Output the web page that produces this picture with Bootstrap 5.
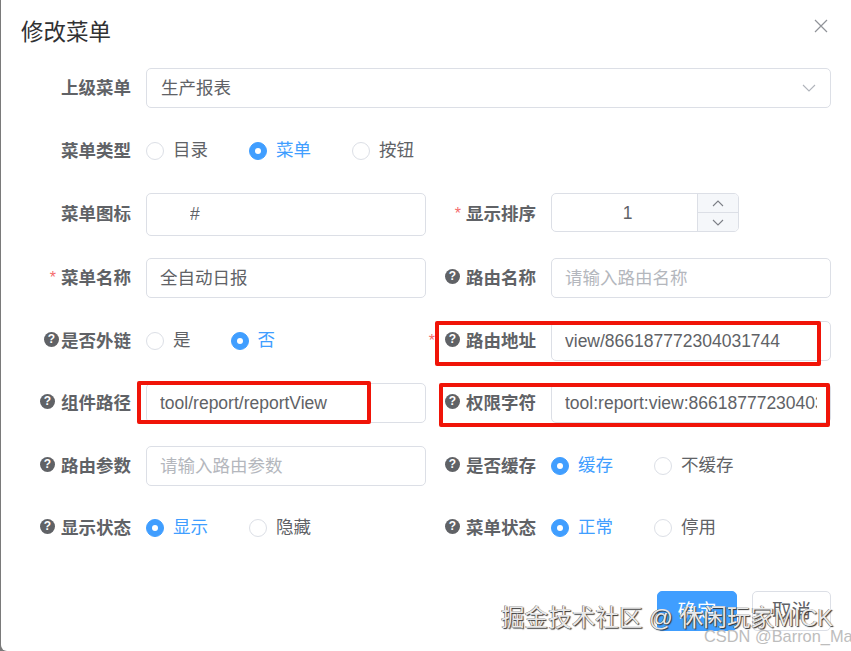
<!DOCTYPE html>
<html lang="zh-CN">
<head>
<meta charset="utf-8">
<title>修改菜单</title>
<link href="https://cdn.jsdelivr.net/npm/bootstrap@5.3.0/dist/css/bootstrap.min.css" rel="stylesheet">
<style>
html,body{height:100%;margin:0;overflow:hidden;background:#7a7a7a}
body{font-family:"Liberation Sans","Noto Sans CJK SC",sans-serif;color:#606266;font-size:17.5px}
.dlg{position:relative;height:651px;margin-left:1px;background:#fff;border-radius:0 0 0 6px;padding:0 20px}
.dlg-head{height:68px}
.dlg-title{font-size:22.5px;line-height:36px;padding-top:15px;color:#303133}
.dlg-close{border:0;background:none;padding:0;margin:19px 3px 0 0;width:14px;height:14px;line-height:0}
.frow{height:40px;margin-bottom:22px}
.frow-x{margin-bottom:23px}
.frow-tall{height:43px}
.fitem{height:100%}
.flabel{width:110px;flex:none;font-weight:700;color:#606266;margin-right:15px;white-space:nowrap;position:relative;top:1px;line-height:1}
.frow-tall .flabel{top:0}
.req{color:#f56c6c;font-weight:400;margin-right:5px;font-size:16px;position:relative;top:-1px}
.req-far{margin-right:10px}
.tip{display:inline-block;width:15px;height:15px;border-radius:50%;background:#606266;color:#fff;font-size:12px;font-weight:700;line-height:15px;text-align:center;position:relative;top:-4px;margin-right:6px;flex:none}
.tip-tight{margin-right:2px}
.ctrl.form-control{width:280px;height:40px;border:1px solid #dcdfe6;border-radius:5px;padding:0 13px;font-size:17.5px;line-height:38px;color:#606266;background:#fff;white-space:nowrap}
.ctrl-tall.form-control{height:43px;line-height:40px;padding-left:43px}
.clip{display:block;overflow:hidden}
.ph{color:#b4b7bd}
.ctrl-wide.form-control{width:100%;position:relative;padding-left:14px}
.chev{position:absolute;right:14px;top:14px}
.spin{width:188px;height:39px;border:1px solid #dcdfe6;border-radius:5px;overflow:hidden}
.spin-val{width:145px;text-align:center;line-height:38px;padding-left:6px}
.spin-btns{width:41px;border-left:1px solid #dcdfe6;background:#f5f7fa}
.spin-btns>span{flex:1;line-height:0}
.spin-btns>span+span{border-top:1px solid #dcdfe6}
.radios{gap:41px}
.radios-t{gap:40px}
.form-check.rd{display:flex;align-items:center;min-height:0;margin:0;padding:0}
.form-check.rd .form-check-input{float:none;margin:0 9px 0 0;width:18px;height:18px;border:1px solid #dcdfe6;flex:none}
.form-check.rd .form-check-input:checked{background-color:#409eff;border-color:#409eff;background-size:18px 18px;background-image:url("data:image/svg+xml,%3csvg xmlns='http://www.w3.org/2000/svg' viewBox='0 0 18 18'%3e%3ccircle cx='9' cy='9' r='3' fill='%23fff'/%3e%3c/svg%3e")}
.form-check.rd .form-check-label{color:#606266;line-height:1}
.form-check.rd .form-check-input:checked+.form-check-label{color:#409eff}
.dlg-foot{padding-top:21px;gap:15px}
.btn.act{height:40px;padding:0;font-size:19.5px;border-radius:5px;line-height:38px}
.act-ok.btn{width:80px;background:#409eff;border-color:#409eff;color:#fff}
.act-no.btn{width:79px;background:#fff;border-color:#dcdfe6;color:#606266}
.mark-box{position:absolute;border:4px solid #f01408;border-radius:2px;pointer-events:none}
.mb1{left:137px;top:381px;width:234px;height:43px}
.mb2{left:435px;top:321px;width:386px;height:45px}
.mb3{left:439px;top:383px;width:391px;height:44px}
.wm1{position:absolute;left:501px;top:602px;font-size:23.6px;line-height:32px;color:#e9e9e9;white-space:nowrap;text-shadow:1px 1px 1px #333,-.5px -.5px 0 #555}
.wm2{position:absolute;left:704px;top:626px;font-size:16.4px;line-height:20px;color:#bdbdbd;white-space:nowrap}
</style>
</head>
<body>
<div class="dlg">
  <div class="dlg-head d-flex justify-content-between align-items-start">
    <div class="dlg-title">修改菜单</div>
    <button type="button" class="dlg-close" aria-label="关闭"><svg width="14" height="14" viewBox="0 0 14 14"><path d="M1 1 13 13M13 1 1 13" stroke="#909399" stroke-width="1.2" fill="none"/></svg></button>
  </div>

  <div class="frow frow-x d-flex align-items-center">
    <div class="flabel text-end">上级菜单</div>
    <div class="ctrl ctrl-wide form-control"><span class="clip">生产报表</span>
      <svg class="chev" width="14" height="10" viewBox="0 0 14 10"><path d="M1 2 7 8 13 2" stroke="#b0b4bb" stroke-width="1.1" fill="none"/></svg>
    </div>
  </div>

  <div class="frow d-flex align-items-center">
    <div class="flabel text-end">菜单类型</div>
    <div class="radios d-flex">
      <div class="form-check rd"><input class="form-check-input" type="radio" name="r1" id="a1"><label class="form-check-label" for="a1">目录</label></div>
      <div class="form-check rd"><input class="form-check-input" type="radio" name="r1" id="a2" checked><label class="form-check-label" for="a2">菜单</label></div>
      <div class="form-check rd"><input class="form-check-input" type="radio" name="r1" id="a3"><label class="form-check-label" for="a3">按钮</label></div>
    </div>
  </div>

  <div class="row g-0 frow frow-tall">
    <div class="col-6 fitem d-flex align-items-center">
      <div class="flabel text-end">菜单图标</div>
      <div class="ctrl ctrl-tall form-control"><span class="clip">#</span></div>
    </div>
    <div class="col-6 fitem d-flex align-items-center">
      <div class="flabel text-end"><span class="req">*</span>显示排序</div>
      <div class="spin d-flex align-self-start">
        <div class="spin-val">1</div>
        <div class="spin-btns d-flex flex-column">
          <span class="d-flex align-items-center justify-content-center"><svg width="14" height="9" viewBox="0 0 14 9"><path d="M2 7 7 2 12 7" stroke="#7d8087" stroke-width="1.1" fill="none"/></svg></span>
          <span class="d-flex align-items-center justify-content-center"><svg width="14" height="9" viewBox="0 0 14 9"><path d="M2 2 7 7 12 2" stroke="#7d8087" stroke-width="1.1" fill="none"/></svg></span>
        </div>
      </div>
    </div>
  </div>

  <div class="row g-0 frow frow-x">
    <div class="col-6 fitem d-flex align-items-center">
      <div class="flabel text-end"><span class="req">*</span>菜单名称</div>
      <div class="ctrl form-control"><span class="clip">全自动日报</span></div>
    </div>
    <div class="col-6 fitem d-flex align-items-center">
      <div class="flabel text-end"><span class="tip">?</span>路由名称</div>
      <div class="ctrl form-control"><span class="clip ph">请输入路由名称</span></div>
    </div>
  </div>

  <div class="row g-0 frow">
    <div class="col-6 fitem d-flex align-items-center">
      <div class="flabel text-end"><span class="tip tip-tight">?</span>是否外链</div>
      <div class="radios radios-t d-flex">
        <div class="form-check rd"><input class="form-check-input" type="radio" name="r2" id="b1"><label class="form-check-label" for="b1">是</label></div>
        <div class="form-check rd"><input class="form-check-input" type="radio" name="r2" id="b2" checked><label class="form-check-label" for="b2">否</label></div>
      </div>
    </div>
    <div class="col-6 fitem d-flex align-items-center">
      <div class="flabel text-end"><span class="req req-far">*</span><span class="tip">?</span>路由地址</div>
      <div class="ctrl form-control"><span class="clip">view/866187772304031744</span></div>
    </div>
  </div>

  <div class="row g-0 frow frow-x">
    <div class="col-6 fitem d-flex align-items-center">
      <div class="flabel text-end"><span class="tip">?</span>组件路径</div>
      <div class="ctrl form-control"><span class="clip">tool/report/reportView</span></div>
    </div>
    <div class="col-6 fitem d-flex align-items-center">
      <div class="flabel text-end"><span class="tip">?</span>权限字符</div>
      <div class="ctrl form-control"><span class="clip">tool:report:view:866187772304031744</span></div>
    </div>
  </div>

  <div class="row g-0 frow">
    <div class="col-6 fitem d-flex align-items-center">
      <div class="flabel text-end"><span class="tip">?</span>路由参数</div>
      <div class="ctrl form-control"><span class="clip ph">请输入路由参数</span></div>
    </div>
    <div class="col-6 fitem d-flex align-items-center">
      <div class="flabel text-end"><span class="tip">?</span>是否缓存</div>
      <div class="radios d-flex">
        <div class="form-check rd"><input class="form-check-input" type="radio" name="r3" id="c1" checked><label class="form-check-label" for="c1">缓存</label></div>
        <div class="form-check rd"><input class="form-check-input" type="radio" name="r3" id="c2"><label class="form-check-label" for="c2">不缓存</label></div>
      </div>
    </div>
  </div>

  <div class="row g-0 frow">
    <div class="col-6 fitem d-flex align-items-center">
      <div class="flabel text-end"><span class="tip">?</span>显示状态</div>
      <div class="radios d-flex">
        <div class="form-check rd"><input class="form-check-input" type="radio" name="r4" id="d1" checked><label class="form-check-label" for="d1">显示</label></div>
        <div class="form-check rd"><input class="form-check-input" type="radio" name="r4" id="d2"><label class="form-check-label" for="d2">隐藏</label></div>
      </div>
    </div>
    <div class="col-6 fitem d-flex align-items-center">
      <div class="flabel text-end"><span class="tip">?</span>菜单状态</div>
      <div class="radios d-flex">
        <div class="form-check rd"><input class="form-check-input" type="radio" name="r5" id="e1" checked><label class="form-check-label" for="e1">正常</label></div>
        <div class="form-check rd"><input class="form-check-input" type="radio" name="r5" id="e2"><label class="form-check-label" for="e2">停用</label></div>
      </div>
    </div>
  </div>

  <div class="dlg-foot d-flex justify-content-end">
    <button type="button" class="btn act act-ok">确定</button>
    <button type="button" class="btn act act-no">取消</button>
  </div>
</div>
<div class="mark-box mb1"></div>
<div class="mark-box mb2"></div>
<div class="mark-box mb3"></div>
<div class="wm1">掘金技术社区 @ 休闲玩家MICK</div>
<div class="wm2">CSDN @Barron_Ma</div>
</body>
</html>
